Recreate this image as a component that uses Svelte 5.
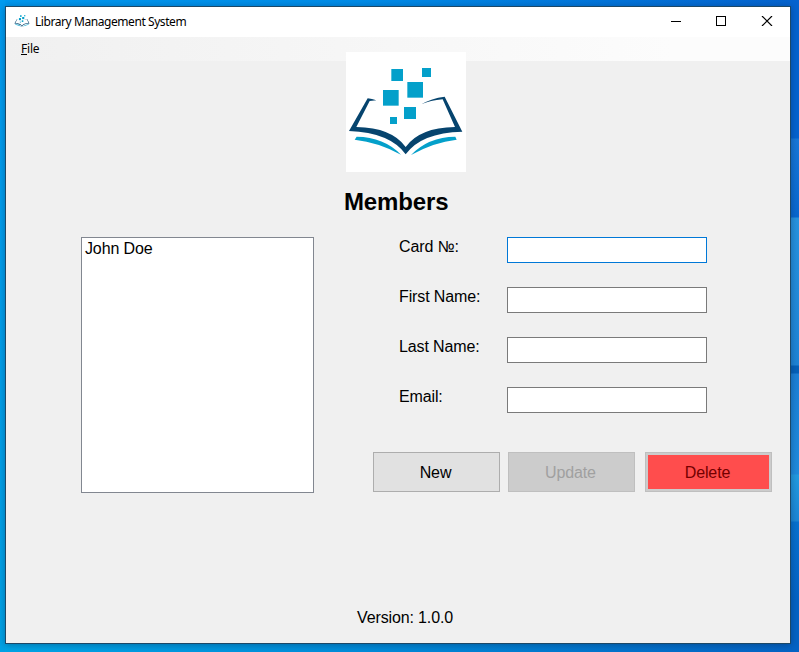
<script>
  const fields = [
    { id: 'card', label: 'Card №:' },
    { id: 'first', label: 'First Name:' },
    { id: 'last', label: 'Last Name:' },
    { id: 'email', label: 'Email:' }
  ];
  let members = $state(['John Doe']);
  let focused = $state('card');
</script>

{#snippet book(cls)}
  <svg class={cls} viewBox="18 18 360 360" aria-hidden="true">
    <g fill="#04a0ca">
      <rect x="154" y="69" width="35" height="36" />
      <rect x="246" y="66" width="27" height="27" />
      <rect x="202" y="108" width="47" height="47" />
      <rect x="129" y="132" width="47" height="47" />
      <rect x="192" y="183" width="36" height="36" />
      <rect x="150" y="213" width="21" height="21" />
      <path d="M50 272Q132 273 183 326Q116 289 44 281Z" />
      <path d="M346 272Q264 273 213 327Q280 289 350 281Z" />
    </g>
    <g fill="#06446e">
      <path d="M83 157Q96 158 109 163L89 165L49 243Q156 245 197 303Q238 245 345 243L308 160Q271 163 244 175Q274 157 314 152L367 257Q243 260 197 325Q151 260 27 255Z" />
    </g>
  </svg>
{/snippet}

<div class="desktop">
  <main class="window">
    <header class="titlebar">
      {@render book('mini')}
      <span class="title">Library Management System</span>
      <svg class="controls" viewBox="0 0 102 10" aria-hidden="true">
        <path d="M0 5h10v1H0zM45 0h10v10H45zM46 1v8h8V1z" fill="#000" fill-rule="evenodd" />
        <path d="M91 0L101 10M101 0L91 10" fill="none" stroke="#000" stroke-width="1.2" />
      </svg>
    </header>
    <nav class="menu"><span><u>F</u>ile</span></nav>
    <div class="logo">{@render book('big')}</div>
    <h1>Members</h1>
    <section class="content">
      <div class="list">
        {#each members as m}<div>{m}</div>{/each}
      </div>
      <div class="right">
        <div class="fields">
          {#each fields as f}
            <div class="field">
              <label for={f.id}>{f.label}</label>
              <input id={f.id} class:active={focused === f.id} onfocus={() => (focused = f.id)} />
            </div>
          {/each}
        </div>
        <div class="buttons">
          <button>New</button>
          <button class="update" disabled>Update</button>
          <button class="delete" disabled>Delete</button>
        </div>
      </div>
    </section>
    <footer>Version: 1.0.0</footer>
  </main>
</div>

<style>
  :global(body) { margin: 0; overflow: hidden; }
  .desktop {
    box-sizing: border-box;
    width: 799px;
    height: 652px;
    padding: 6px 8px 8px 5px;
    background:
      linear-gradient(#0563cf 0 138px, #1878d8 139px, #0868d0 217px, #2793df 218px, #1e84d6 365px, #0561b9 366px 373px, #1c80d6 374px, #1f8bdc 474px, #229be0 475px, #1c86d6 521px, #0872d0 522px, #0563c4 600px 652px) right / 8px 100% no-repeat,
      linear-gradient(#009bf0, #00a2e6) left / 5px 100% no-repeat,
      linear-gradient(90deg, #0098ee, #008ce8 45%, #0563cf) top / 100% 6px no-repeat,
      linear-gradient(90deg, #00a5e6, #008cda 45%, #0563c4);
  }
  .window {
    box-sizing: border-box;
    width: 786px;
    height: 638px;
    border: 1px solid #1c4867;
    background: #f0f0f0;
    box-shadow: 0 1px 7px rgba(0, 20, 50, .35);
    display: flex;
    flex-direction: column;
    font: 16px/18px "Liberation Sans", Arial, sans-serif;
    letter-spacing: -.13px;
    color: #000;
  }
  .titlebar {
    height: 30px;
    flex: none;
    display: flex;
    align-items: center;
    padding: 0 17px 0 8px;
    background: #fff;
  }
  .mini { width: 16px; height: 16px; margin-top: -2px; }
  .title {
    margin-left: 5px;
    flex: 1;
    font: 12px/16px "Noto Sans", "Open Sans", sans-serif;
    letter-spacing: -.43px;
  }
  .controls { width: 102px; height: 10px; margin-top: -2px; }
  .menu {
    height: 24px;
    flex: none;
    box-sizing: border-box;
    padding: 4px 15px;
    background: linear-gradient(90deg, #f0f0f0, #fcfcfc 85%);
    font: 12px/16px "Noto Sans", "Open Sans", sans-serif;
    letter-spacing: -.2px;
  }
  .menu u { text-underline-offset: 1px; }
  .logo {
    width: 120px;
    height: 120px;
    margin: -9px 0 0 340px;
    flex: none;
    background: #fff;
  }
  .big { display: block; width: 120px; height: 120px; }
  h1 { margin: 15px 0 0 338px; font-size: 24px; line-height: 30px; font-weight: bold; }
  .content { display: flex; margin: 20px 0 0 75px; height: 256px; }
  .list {
    box-sizing: border-box;
    width: 233px;
    height: 256px;
    border: 1px solid #828790;
    background: #fff;
    padding: 2px 3px;
  }
  .right { margin-left: 59px; }
  .fields { padding-left: 26px; }
  .field { display: flex; height: 50px; align-items: flex-start; }
  .field label { width: 108px; padding-top: 1px; }
  .field input {
    box-sizing: border-box;
    width: 200px;
    height: 26px;
    border: 1px solid #7a7a7a;
    background: #fff;
    outline: 0;
    padding: 2px;
    font: inherit;
  }
  .field input.active { border-color: #0078d7; }
  .buttons { display: flex; margin-top: 15px; }
  button {
    box-sizing: border-box;
    width: 127px;
    height: 40px;
    padding: 2px 2px 0 0;
    border: 1px solid #adadad;
    background: #e1e1e1;
    color: #000;
    font: inherit;
    letter-spacing: inherit;
  }
  .update { margin-left: 8px; border-color: #bfbfbf; background: #ccc; color: #a0a0a0; }
  .delete {
    margin-left: 10px;
    border-color: #bfbfbf;
    background: #ff4d4d;
    box-shadow: inset 0 0 0 2px #ccc;
    color: #730000;
  }
  footer { margin: 116px 0 0 351px; }
</style>
